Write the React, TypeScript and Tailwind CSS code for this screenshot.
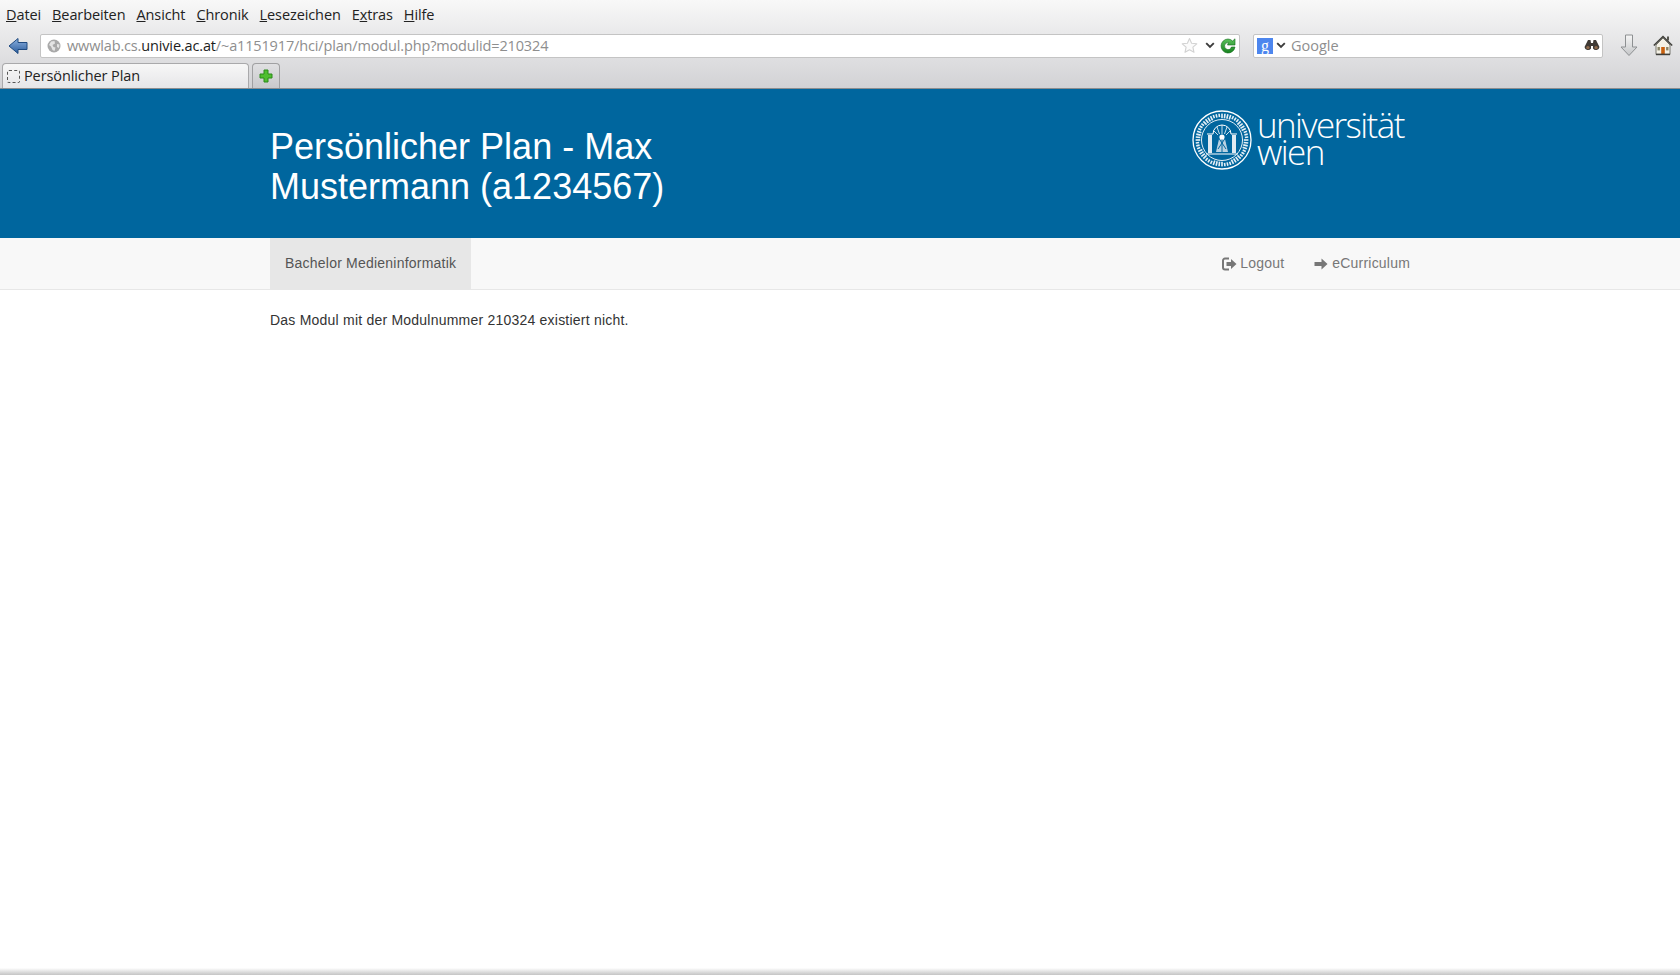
import React from "react";

const ui = "font-['Open_Sans','Noto_Sans',sans-serif]";

function Back() {
  return (
    <svg width="20" height="18" viewBox="0 0 20 18" className="block">
      <defs>
        <linearGradient id="bk" x1="0" y1="0" x2="0" y2="1">
          <stop offset="0" stopColor="#8db2e0" />
          <stop offset="1" stopColor="#2a5b9c" />
        </linearGradient>
      </defs>
      <path d="M1 9 L10 1.5 V5.5 H19 V12.5 H10 V16.5 Z" fill="url(#bk)" stroke="#1f4a80" strokeWidth="1" strokeLinejoin="round" />
    </svg>
  );
}

function Globe() {
  return (
    <svg width="14" height="14" viewBox="0 0 14 14" className="block">
      <circle cx="7" cy="7" r="6.5" fill="#a9a9a9" />
      <path d="M4 2.5 L7.5 2 L8 4.5 L5.5 6 L6.5 8 L8.5 8.5 L7.5 12 L5.5 11 L4 7.5 L2 6 Z M10 5 L12.5 5.5 L12 9 L10 8 Z" fill="#e4e4e4" />
    </svg>
  );
}

function Star() {
  return (
    <svg width="17" height="17" viewBox="0 0 17 17" className="block">
      <path d="M8.5 1.5 L10.6 6.3 L15.8 6.8 L11.9 10.2 L13 15.3 L8.5 12.7 L4 15.3 L5.1 10.2 L1.2 6.8 L6.4 6.3 Z" fill="#fbfbfb" stroke="#d2d2d2" strokeWidth="1.1" strokeLinejoin="round" />
    </svg>
  );
}

function Chevron() {
  return (
    <svg width="10" height="7" viewBox="0 0 10 7" className="block">
      <path d="M1.2 1.2 L5 5 L8.8 1.2" fill="none" stroke="#3c3c3c" strokeWidth="1.9" />
    </svg>
  );
}

function Reload() {
  return (
    <svg width="16" height="16" viewBox="0 0 16 16" className="block">
      <defs>
        <linearGradient id="rl" x1="0" y1="0" x2="0" y2="1">
          <stop offset="0" stopColor="#5cc25c" />
          <stop offset="1" stopColor="#16821f" />
        </linearGradient>
      </defs>
      <path d="M8 1 A7 7 0 1 0 15 9 H11.4 A3.5 3.5 0 1 1 8.6 4.6 L7.5 7 L15 7 L15 0.8 L12.6 3 A7 7 0 0 0 8 1 Z" fill="url(#rl)" stroke="#0f6a18" strokeWidth="0.6" />
    </svg>
  );
}

function GoogleTile() {
  return (
    <div className="flex h-[16px] w-[16px] items-center justify-center bg-[#4d86ee] font-['Liberation_Serif',serif] text-[16px] leading-none text-white">
      g
    </div>
  );
}

function Binoculars() {
  return (
    <svg width="16" height="13" viewBox="0 0 16 13" className="block">
      <path d="M4 1 H6.5 L7 4 H9 L9.5 1 H12 L15.5 8 A3.6 3.6 0 0 1 9 9.5 V7 H7 V9.5 A3.6 3.6 0 0 1 0.5 8 Z" fill="#3f3a35" />
      <circle cx="3.9" cy="8.6" r="1.7" fill="#8f6a4c" />
      <circle cx="12.1" cy="8.6" r="1.7" fill="#8f6a4c" />
    </svg>
  );
}

function Download() {
  return (
    <svg width="18" height="24" viewBox="0 0 18 24" className="block">
      <defs>
        <linearGradient id="dl" x1="0" y1="0" x2="0" y2="1">
          <stop offset="0" stopColor="#f6f6f6" />
          <stop offset="1" stopColor="#c4c6c8" />
        </linearGradient>
      </defs>
      <path d="M5.5 1 H12.5 V13 H17 L9 21.5 L1 13 H5.5 Z" fill="url(#dl)" stroke="#8d9092" strokeWidth="1" strokeLinejoin="round" />
    </svg>
  );
}

function Home() {
  return (
    <svg width="20" height="21" viewBox="0 0 20 21" className="block">
      <path d="M3 10 V19.5 H17 V10 L10 3 Z" fill="#f4f1e6" stroke="#5b5b52" strokeWidth="0.8" />
      <path d="M0.8 10.5 L10 1.5 L19.2 10.5" fill="none" stroke="#3f3f3a" strokeWidth="1.5" />
      <rect x="14" y="1.5" width="2" height="4" fill="#55554e" />
      <rect x="8.2" y="12" width="3.6" height="7.5" fill="#c9600f" />
      <rect x="4.5" y="12" width="2.4" height="3.4" fill="#8a8466" />
      <rect x="13.1" y="12" width="2.4" height="3.4" fill="#8a8466" />
      <rect x="3" y="18.6" width="14" height="1.6" fill="#3f3f3a" />
    </svg>
  );
}

function TabDashed() {
  return <div className="h-[13px] w-[13px] rounded-[2px] border border-dashed border-[#555]" />;
}

function Plus() {
  return (
    <svg width="14" height="14" viewBox="0 0 14 14" className="block">
      <path d="M5 1 H9 V5 H13 V9 H9 V13 H5 V9 H1 V5 H5 Z" fill="#4fbe2f" stroke="#2b8a1b" strokeWidth="1" strokeLinejoin="round" />
    </svg>
  );
}

function Seal() {
  const ticks = Array.from({ length: 56 }, (_, i) => i * (360 / 56));
  return (
    <svg width="60" height="60" viewBox="0 0 60 60" className="block shrink-0">
      <circle cx="30" cy="30" r="29" fill="none" stroke="#fff" strokeWidth="1.3" />
      <circle cx="30" cy="30" r="20.5" fill="none" stroke="#fff" strokeWidth="0.9" />
      {ticks.map((a) => (
        <rect key={a} x="29.2" y="3.6" width="1.6" height={a % 3 < 1.5 ? 4.6 : 3.4} fill="#e6f0f6" transform={`rotate(${a} 30 30)`} />
      ))}
      <path d="M16 43 V25 H20 V43 Z M40 43 V25 H44 V43 Z" fill="#dfeaf2" />
      <path d="M15 24 H21 M39 24 H45 M14 44 H46" stroke="#fff" strokeWidth="1.2" />
      <path d="M21 24 A9 9 0 0 1 39 24" fill="none" stroke="#fff" strokeWidth="1" />
      <path d="M30 15 V24 M25 17 L27.5 24 M35 17 L32.5 24 M21.5 20.5 L26 25 M38.5 20.5 L34 25" stroke="#fff" strokeWidth="0.8" />
      <path d="M24 42 L27 29 H33 L36 42 Z" fill="#b9d2e2" />
      <path d="M26 27 L34 39 M34 27 L26 39 M30 26 V42" stroke="#00669e" strokeWidth="1" />
      <circle cx="30" cy="27" r="2.6" fill="#fff" />
    </svg>
  );
}

function LogoutIcon() {
  return (
    <svg width="15" height="14" viewBox="0 0 15 14" className="block">
      <path d="M7 1.5 H3 A2 2 0 0 0 1 3.5 V10.5 A2 2 0 0 0 3 12.5 H7" fill="none" stroke="#777" strokeWidth="2" />
      <path d="M4.5 5 H9 V2 L14.5 7 L9 12 V9 H4.5 Z" fill="#777" />
    </svg>
  );
}

function ArrowIcon() {
  return (
    <svg width="14" height="12" viewBox="0 0 14 12" className="block">
      <path d="M0.5 4 H7.5 V0.5 L13.5 6 L7.5 11.5 V8 H0.5 Z" fill="#777" />
    </svg>
  );
}

const menu: [string, string][] = [
  ["D", "atei"],
  ["B", "earbeiten"],
  ["A", "nsicht"],
  ["C", "hronik"],
  ["L", "esezeichen"],
  ["Ex", "tras"],
  ["H", "ilfe"],
];

function MenuItem({ k, rest }: { k: string; rest: string }) {
  if (k === "Ex") {
    return (
      <span>
        E<span className="underline">x</span>
        {rest}
      </span>
    );
  }
  return (
    <span>
      <span className="underline">{k}</span>
      {rest}
    </span>
  );
}

export default function App() {
  return (
    <div className="flex h-[975px] w-[1680px] flex-col overflow-hidden bg-white font-['Liberation_Sans',Arial,sans-serif]">
      <div className={`h-[89px] shrink-0 border-b border-[#8b8d8f] bg-gradient-to-b from-[#f8f8f8] to-[#d2d2d5] ${ui}`}>
        <div className="flex h-[29px] items-center gap-[11px] pl-[6px] pt-px text-[14.5px] tracking-[-0.1px] text-[#222]">
          {menu.map(([k, r]) => (
            <MenuItem key={k} k={k} rest={r} />
          ))}
        </div>
        <div className="flex h-[33px] items-center">
          <div className="ml-[8px] w-[20px]">
            <Back />
          </div>
          <div className="ml-[12px] flex h-[24px] w-[1200px] items-center rounded-[2px] border border-[#c4c4c4] bg-white pl-[6px] pr-[3px] text-[14.5px] tracking-[-0.15px] text-[#8e8e8e]">
            <Globe />
            <span className="ml-[6px] flex-1 whitespace-nowrap">
              wwwlab.cs.<span className="text-[#1c1c1c]">univie.ac.at</span>/~a1151917/hci/plan/modul.php?modulid=210324
            </span>
            <Star />
            <div className="ml-[7px]">
              <Chevron />
            </div>
            <div className="ml-[5px]">
              <Reload />
            </div>
          </div>
          <div className="ml-[13px] flex h-[24px] w-[350px] items-center rounded-[2px] border border-[#c4c4c4] bg-white pl-[3px] pr-[2px] text-[14.5px] text-[#8e8e8e]">
            <GoogleTile />
            <div className="ml-[3px]">
              <Chevron />
            </div>
            <span className="ml-[5px] flex-1">Google</span>
            <Binoculars />
          </div>
          <div className="ml-[17px]">
            <Download />
          </div>
          <div className="ml-[15px]">
            <Home />
          </div>
        </div>
        <div className="flex h-[26px] items-end gap-[3px] pl-[2px]">
          <div className="flex h-[25px] w-[247px] items-center rounded-t-[4px] border border-b-0 border-[#a9a9ab] bg-gradient-to-b from-[#f7f7f7] to-[#e6e6e8] pl-[4px] text-[14.5px] tracking-[-0.1px] text-[#222]">
            <TabDashed />
            <span className="ml-[4px]">Persönlicher Plan</span>
          </div>
          <div className="flex h-[25px] w-[28px] items-center justify-center rounded-t-[4px] border border-b-0 border-[#a0a0a2] bg-gradient-to-b from-[#e0e0e2] to-[#c9c9cc]">
            <Plus />
          </div>
        </div>
      </div>

      <header className="h-[149px] shrink-0 bg-[#00669e]">
        <div className="mx-auto flex w-[1140px] justify-between">
          <h1 className="mt-[38px] w-[480px] text-[36px] font-normal leading-[40px] text-white">
            Persönlicher Plan - Max Mustermann (a1234567)
          </h1>
          <div className="mt-[21px] flex h-[60px] w-[218px] items-start">
            <Seal />
            <div className="ml-[5px] mt-[1px] font-['Open_Sans','Noto_Sans',sans-serif] text-[35px] font-light leading-[27px] tracking-[-1.6px] text-white">
              <div>universität</div>
              <div>wien</div>
            </div>
          </div>
        </div>
      </header>

      <nav className="h-[52px] shrink-0 border-b border-[#e7e7e7] bg-[#f8f8f8]">
        <div className="mx-auto flex h-[51px] w-[1140px] items-stretch justify-between text-[14px] text-[#777]">
          <div className="flex items-center bg-[#e7e7e7] px-[15px] tracking-[0.22px] text-[#555]">
            Bachelor Medieninformatik
          </div>
          <div className="flex items-center gap-[30px] tracking-[0.2px]">
            <div className="flex items-center gap-[3px]">
              <LogoutIcon />
              <span>Logout</span>
            </div>
            <div className="flex items-center gap-[4px]">
              <ArrowIcon />
              <span>eCurriculum</span>
            </div>
          </div>
        </div>
      </nav>

      <main className="flex-1">
        <div className="mx-auto w-[1140px] pt-[20px] text-[14px] leading-[20px] tracking-[0.22px] text-[#333]">
          Das Modul mit der Modulnummer 210324 existiert nicht.
        </div>
      </main>

      <div className="h-[7px] shrink-0 bg-gradient-to-b from-white to-[#c4c4c4]" />
    </div>
  );
}
